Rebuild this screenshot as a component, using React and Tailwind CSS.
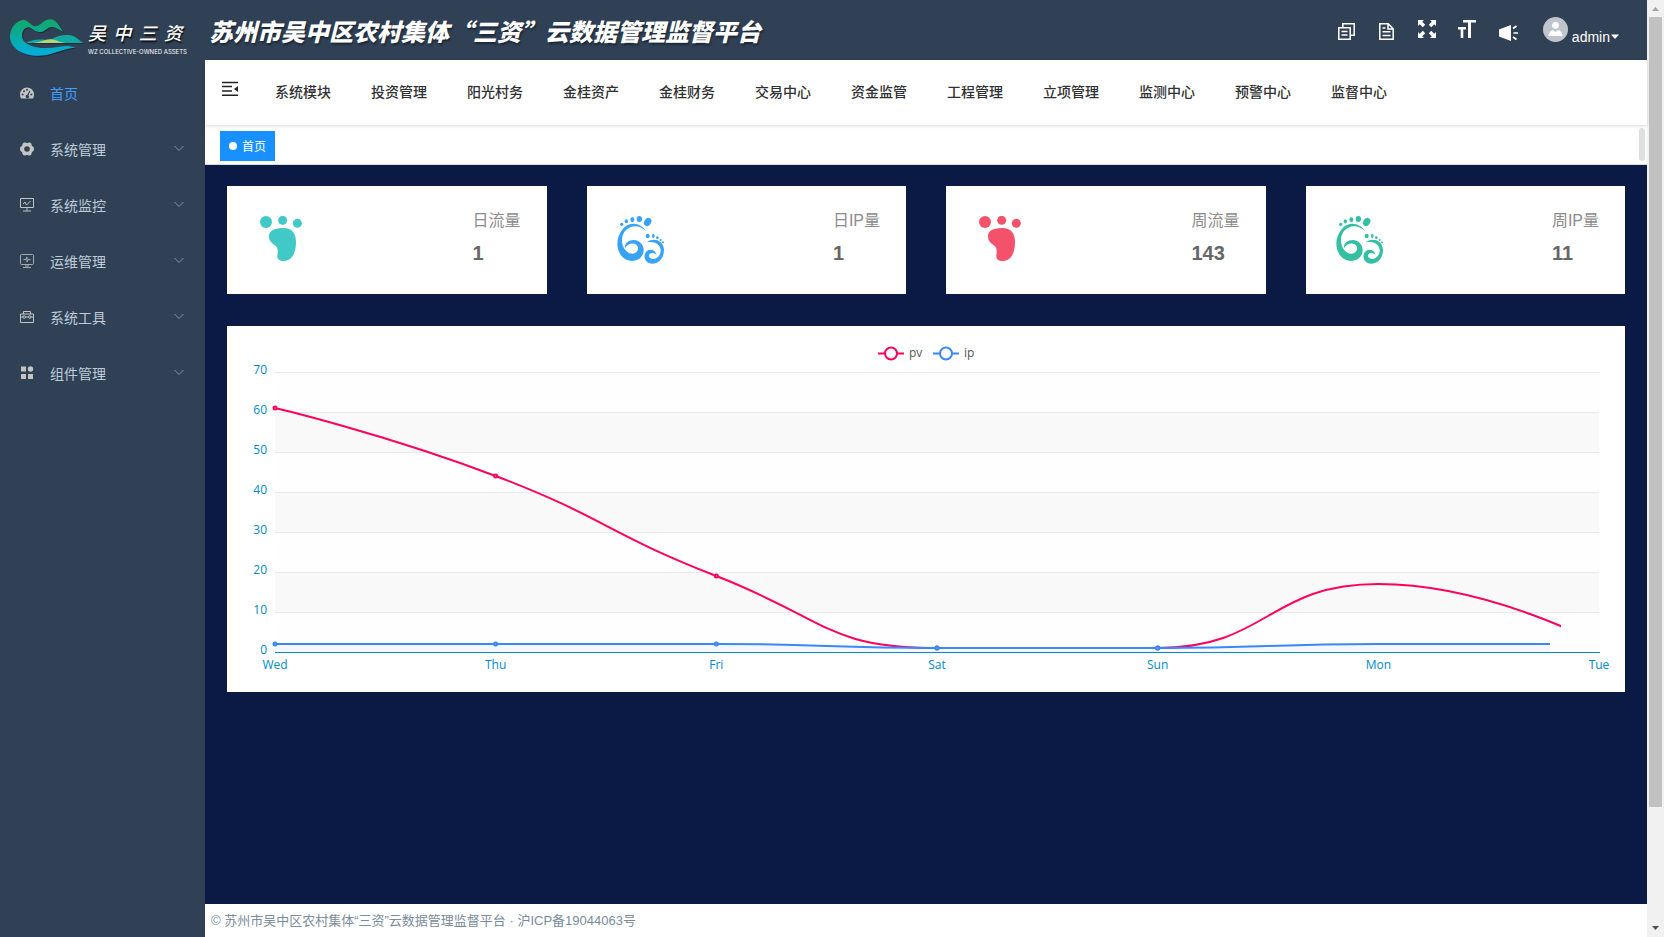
import { useState } from "react";

const menuItems = [
  { name: "首页", icon: "dashboard" },
  { name: "系统管理", icon: "system", children: true },
  { name: "系统监控", icon: "monitor", children: true },
  { name: "运维管理", icon: "maintain", children: true },
  { name: "系统工具", icon: "tools", children: true },
  { name: "组件管理", icon: "component", children: true },
];

const modules = [
  "系统模块",
  "投资管理",
  "阳光村务",
  "金桂资产",
  "金桂财务",
  "交易中心",
  "资金监管",
  "工程管理",
  "立项管理",
  "监测中心",
  "预警中心",
  "监督中心",
];

const stats = [
  { label: "日流量", value: 1, icon: "foot", color: "text-[#40c9c6]" },
  { label: "日IP量", value: 1, icon: "feet", color: "text-[#36a3f7]" },
  { label: "周流量", value: 143, icon: "foot", color: "text-[#f4516c]" },
  { label: "周IP量", value: 11, icon: "feet", color: "text-[#34bfa3]" },
];

const days = ["Wed", "Thu", "Fri", "Sat", "Sun", "Mon", "Tue"];
const pv = [61, 44, 19, 1, 1, 17, 2];
const ip = [2, 2, 2, 1, 1, 2, 2];

const menuIcons = {
  dashboard: (
    <>
      <path
        fill="currentColor"
        d="M7 1.5a7 7 0 0 0-7 7c0 1.5.4 2.9 1 4h12c.6-1.1 1-2.500 1-4a7 7 0 0 0-7-7Z"
      />
      <g fill="#304156">
        <circle cx="2.6" cy="8.6" r="1" />
        <circle cx="4" cy="5.2" r="1" />
        <circle cx="7" cy="3.7" r="1" />
        <circle cx="11.4" cy="8.6" r="1" />
        <path d="M9.500 4.500l.9.5-1.900 4.200a1.700 1.700 0 1 1-1.200-.4Z" />
      </g>
    </>
  ),
  system: (
    <path
      fill="currentColor"
      fillRule="evenodd"
      d="M4.300.5c.9-.4 1.700.6 2.700.6S8.800.1 9.700.5l1.300.8c.8.6.4 1.700.9 2.500s1.800.9 2 1.900v2.600c-.2 1-1.500 1.100-2 1.900s-.1 1.900-.9 2.500l-1.300.8c-.9.4-1.700-.6-2.700-.6s-1.800 1-2.700.6L3 12.700c-.8-.6-.4-1.700-.9-2.500s-1.800-.9-2-1.900V5.700c.2-1 1.500-1.100 2-1.900S2.200 1.900 3 1.300ZM7 4.200a2.800 2.800 0 1 0 0 5.600 2.800 2.800 0 0 0 0-5.600Z"
    />
  ),
  monitor: (
    <g fill="none" stroke="currentColor">
      <path d="M.5.5h13v9H.5zM7 9.500v3M3 13h8" />
      <path d="M3 6l2-2 1.500 3L10.500 3" />
    </g>
  ),
  maintain: (
    <g fill="none" stroke="currentColor" opacity=".8">
      <rect x=".5" y=".5" width="13" height="10" rx="1" />
      <path d="M3.500 5.500H6L7 3v5l1-2.500h2.500" />
      <path d="M5 12h4M3 13.500h8" />
    </g>
  ),
  tools: (
    <g fill="none" stroke="currentColor">
      <path d="M.5 4h13v8.500H.5zM3.500 4V1.500h7V4" />
      <path d="M1 7h2.500M5.500 7h3M10.500 7H13" />
      <circle cx="4.200" cy="7" r="1.300" />
      <circle cx="9.800" cy="7" r="1.300" />
    </g>
  ),
  component: (
    <g fill="currentColor">
      <path d="M1 .5h5v5H1zM1 8h5v5H1zM8 8h5v5H8z" />
      <circle cx="10.500" cy="3" r="2.700" />
    </g>
  ),
};

const MenuIcon = ({ name }) => (
  <svg viewBox="0 0 14 14" className="h-[14px] w-[14px] shrink-0 text-[#c4c4c4]">
    {menuIcons[name]}
  </svg>
);

const Logo = () => (
  <div className="flex h-15 items-center gap-0.5 pt-4 pl-2.5">
    <svg viewBox="30 58 228 117" className="h-[39px] w-[76px] shrink-0">
      <defs>
        <linearGradient id="hill" x1="0" y1="0" x2="0" y2="1">
          <stop offset="0" stopColor="#12a866" />
          <stop offset="1" stopColor="#00aee0" />
        </linearGradient>
      </defs>
      <path
        fill="#1d2938"
        transform="translate(3 3)"
        d="M190 96C178 84 172 58 148 59C130 60 122 79 108 80C94 80 86 62 70 60C48 64 30 84 30 112C32 150 75 170 118 168C165 166 185 146 226 144C200 132 175 144 140 145C100 146 66 132 66 108C66 92 76 82 88 83C100 88 108 99 122 97C136 96 142 80 158 82C170 84 178 92 190 96Z"
      />
      <path
        fill="url(#hill)"
        d="M190 96C178 84 172 58 148 59C130 60 122 79 108 80C94 80 86 62 70 60C48 64 30 84 30 112C32 150 75 170 118 168C165 166 185 146 226 144C200 132 175 144 140 145C100 146 66 132 66 108C66 92 76 82 88 83C100 88 108 99 122 97C136 96 142 80 158 82C170 84 178 92 190 96Z"
      />
      <path
        fill="#1d2938"
        transform="translate(2 2)"
        d="M78 130C105 112 135 124 155 118C175 108 190 104 212 107C230 110 238 125 252 130Z"
      />
      <path fill="#10aaa0" d="M78 130C105 112 135 124 155 118C175 108 190 104 212 107C230 110 238 125 252 130Z" />
      <path fill="#b5d67a" d="M98 130C125 128 135 119 152 119C168 119 175 128 196 130Z" />
    </svg>
    <div className="w-[98px] text-white">
      <div className="flex justify-between pr-1 text-lg leading-6 font-medium italic [text-shadow:1px_2px_1px_#111]">
        <span>吴</span>
        <span>中</span>
        <span>三</span>
        <span>资</span>
      </div>
      <div className="mt-1 font-[Inter,sans-serif] text-[6px] leading-2 whitespace-nowrap">
        WZ COLLECTIVE-OWNED ASSETS
      </div>
    </div>
  </div>
);

const Sidebar = ({ active, onSelect }) => (
  <aside className="w-[205px] shrink-0 bg-[#304156]">
    <Logo />
    <nav className="pt-1.5">
      {menuItems.map((item) => (
        <button
          key={item.name}
          onClick={() => onSelect(item.name)}
          className={`flex h-14 w-full items-center px-5 pb-0.5 text-sm ${
            active === item.name ? "text-[#409eff]" : "text-[#bfcbd9]"
          }`}
        >
          <MenuIcon name={item.icon} />
          <span className="ml-4 flex-1 text-left">{item.name}</span>
          {item.children && (
            <svg viewBox="0 0 12 12" className="mb-0.5 h-3 w-3 text-[#8a94a0]">
              <path d="M1.500 4l4.500 4.500L10.500 4" fill="none" stroke="currentColor" />
            </svg>
          )}
        </button>
      ))}
    </nav>
  </aside>
);

const TopBar = () => (
  <header className="flex h-15 items-center justify-between bg-[#304156] pr-[27px] pl-1 text-white">
    <h1 className="pt-0.5 text-2xl leading-8 font-black whitespace-nowrap italic [text-shadow:1px_2px_2px_#1c2735]">
      苏州市吴中区农村集体“三资”云数据管理监督平台
    </h1>
    <div className="flex items-center gap-5 pt-0.5">
      <button aria-label="复制">
        <svg viewBox="0 0 20 24" className="h-6 w-5" fill="none" stroke="currentColor" strokeWidth="1.5">
          <path d="M1.800 8.800h11.400v11.400H1.800zM5.800 8V4.800h11.400v11.400H14M4.500 12.500h6M4.500 16h6" />
        </svg>
      </button>
      <button aria-label="文档">
        <svg viewBox="0 0 20 24" className="h-6 w-5" fill="none" stroke="currentColor" strokeWidth="1.5">
          <path d="M2.800 4.800h8.400l5 5v10.400H2.800zM11 5v5h5M5.500 9h3M5.500 12.800h8M5.500 16.500h8" />
        </svg>
      </button>
      <button aria-label="全屏">
        <svg viewBox="0 0 20 24" className="h-6 w-5" fill="currentColor">
          <path d="M1 1h6L5.200 2.800 8.200 5.800 5.800 8.200 2.800 5.200 1 7zM19 1v6l-1.800-1.800-3 3-2.400-2.400 3-3L13 1zM1 19v-6l1.800 1.800 3-3 2.400 2.400-3 3L7 19zM19 19h-6l1.800-1.800-3-3 2.400-2.400 3 3L19 13z" />
        </svg>
      </button>
      <button aria-label="字号">
        <svg viewBox="0 0 20 24" className="h-6 w-5" fill="currentColor">
          <path d="M6 1h13v2.500h-5V19h-3V3.500H6zM1 8h8v2.500H6.300V19H3.700v-8.500H1z" />
        </svg>
      </button>
      <button aria-label="公告">
        <svg viewBox="0 0 22 24" className="h-6 w-[22px]">
          <path fill="currentColor" d="M2 10.500l4-1.500 8-3v16l-8-3-4-1.500z" />
          <path d="M16 9.500l3.500-2.500M16.500 14H21M16 18l3.500 2.500" stroke="currentColor" strokeWidth="1.7" />
        </svg>
      </button>
      <button className="ml-1 flex items-center text-sm">
        <svg viewBox="0 0 25 25" className="mr-1 mb-1 h-[25px] w-[25px]">
          <circle cx="12.5" cy="12.5" r="12.5" fill="#c0c4cc" />
          <circle cx="12.5" cy="8.3" r="3.4" fill="#fff" />
          <path fill="#fff" d="M5.500 19c.2-3.500 2-5.500 4.500-6l2.500 2 2.500-2c2.500.5 4.300 2.500 4.500 6z" />
        </svg>
        <span className="pt-3 font-[Liberation_Sans,sans-serif]">admin</span>
        <svg viewBox="0 0 10 6" className="mt-3 h-1.5 w-[10px]">
          <path fill="currentColor" d="M1 .5h8L5 5z" />
        </svg>
      </button>
    </div>
  </header>
);

const ModuleNav = () => (
  <nav className="relative z-10 flex h-[65px] items-center bg-white pb-1 pl-4 shadow-[0_1px_3px_rgba(0,21,41,0.16)]">
    <button aria-label="收起菜单" className="mb-1">
      <svg viewBox="0 0 18 16" className="h-4 w-[18px]" fill="none" stroke="#222" strokeWidth="1.4">
        <path d="M1 1.500h16M1 5.500h10M1 10h10M1 14.300h16" />
        <path d="M17 5v6l-4-3z" fill="#222" stroke="none" />
      </svg>
    </button>
    <div className="ml-4 flex">
      {modules.map((m) => (
        <a key={m} href="#" className="px-5 text-sm font-medium whitespace-nowrap text-[#303133]">
          {m}
        </a>
      ))}
    </div>
  </nav>
);

const TagsBar = () => (
  <div className="flex h-10 items-center justify-between border-b border-[#d8dce5] bg-white pr-0.5 pl-[15px]">
    <a
      href="#"
      className="mt-0.5 flex h-[30px] items-center gap-[5px] bg-[#1890ff] pr-[9px] pl-[9px] text-xs text-white"
    >
      <span className="h-2 w-2 rounded-full bg-white" />
      首页
    </a>
    <div className="h-[33px] w-1.5 rounded-full bg-[#dddee0]" />
  </div>
);

const Foot = () => (
  <svg viewBox="111 108 144 144" className="h-12 w-12" fill="currentColor">
    <circle cx="138" cy="126" r="18" />
    <circle cx="188" cy="121" r="13.5" />
    <circle cx="232" cy="130" r="13.5" />
    <path d="M187 144C215 143 228 158 228 187C228 222 214 243 190 243C178 243 171 237 172 226C173 216 175 210 170 202C165 192 147 191 147 169C147 152 162 145 187 144Z" />
  </svg>
);

const Feet = () => (
  <svg viewBox="0 0 144 144" className="h-12 w-12" fill="currentColor">
    <circle cx="14" cy="25" r="5" />
    <ellipse cx="28" cy="16" rx="5" ry="6" />
    <ellipse cx="46" cy="11" rx="6" ry="7" />
    <ellipse cx="67" cy="9" rx="8" ry="9" />
    <ellipse cx="92" cy="18" rx="10" ry="13" transform="rotate(35 92 18)" />
    <path d="M87 46C76 24 40 12 18 38C-3 62-4 96 12 118C28 141 64 140 76 118C88 96 72 72 50 72C34 72 22 82 24 97C31 84 45 79 56 85C69 94 64 111 48 113C30 114 15 94 15 74C14 34 60 16 87 46Z" />
    <ellipse cx="92" cy="60" rx="6" ry="7" />
    <ellipse cx="109" cy="60" rx="4" ry="6" />
    <circle cx="121" cy="65" r="4" />
    <circle cx="131" cy="72" r="3" />
    <circle cx="138" cy="79" r="3" />
    <path d="M89 79C109 64 139 72 141 101C141 128 124 143 106 143C88 143 80 128 83 116C88 96 114 96 119 117C108 106 95 112 96 121C99 133 121 132 129 115C137 96 123 72 89 79Z" />
  </svg>
);

const StatCard = ({ stat }) => (
  <div className="flex h-27 justify-between bg-white pt-[30px] pr-[26px] pl-[30px]">
    <div className={stat.color}>{stat.icon === "foot" ? <Foot /> : <Feet />}</div>
    <div className="-mt-[7px] font-[Liberation_Sans,Noto_Sans_CJK_SC,sans-serif]">
      <div className="text-base leading-6 text-[#8c8c8c]">{stat.label}</div>
      <div className="mt-2 text-xl leading-6 font-bold text-[#666]">{stat.value}</div>
    </div>
  </div>
);

const LEFT = 48;
const RIGHT = 1372;
const BASE = 326;
const STEP = (RIGHT - LEFT) / (days.length - 1);

const toPoints = (values) => values.map((v, i) => [LEFT + i * STEP, BASE - v * 4]);

// cubic curve through the points, flat at local extremes
const smoothPath = (points) => {
  const slope = (i) => {
    if (i === 0 || i === points.length - 1) return 0;
    const before = points[i][1] - points[i - 1][1];
    const after = points[i + 1][1] - points[i][1];
    return before * after <= 0 ? 0 : (before + after) / 4;
  };

  let d = `M${points[0][0]} ${points[0][1]}`;
  for (let i = 1; i < points.length; i++) {
    const [x0, y0] = points[i - 1];
    const [x1, y1] = points[i];
    const c0 = i === 1 ? x0 : x0 + STEP / 2;
    const c1 = i === points.length - 1 ? x1 : x1 - STEP / 2;
    d += `C${c0} ${y0 + slope(i - 1)} ${c1} ${y1 - slope(i)} ${x1} ${y1}`;
  }
  return d;
};

const TrafficChart = () => {
  const pvPoints = toPoints(pv);
  const ipPoints = toPoints(ip);
  const ipPath = smoothPath(ipPoints);

  return (
    <svg viewBox="0 0 1398 366" className="block w-full bg-white font-[Open_Sans,sans-serif] text-[12px]">
      <clipPath id="pvClip">
        <rect x="0" y="0" width="1334" height="366" />
      </clipPath>
      <clipPath id="ipClip">
        <rect x="0" y="0" width="1323" height="366" />
      </clipPath>

      {/* bands */}
      {[70, 60, 50, 40, 30, 20, 10].map((v, i) => (
        <g key={v}>
          <rect
            x={LEFT}
            y={BASE - v * 4}
            width={RIGHT - LEFT}
            height="40"
            fill={i % 2 ? "#f9f9f9" : "#fefefe"}
          />
          <path d={`M${LEFT} ${BASE - v * 4 + 0.5}H${RIGHT}`} stroke="#eaeaea" />
        </g>
      ))}

      {[0, 10, 20, 30, 40, 50, 60, 70].map((v) => (
        <text key={v} x="40" y={BASE + 2 - v * 4} textAnchor="end" fill="#008acd">
          {v}
        </text>
      ))}
      {days.map((day, i) => (
        <text key={day} x={LEFT + i * STEP} y="343" textAnchor="middle" fill="#008acd">
          {day}
        </text>
      ))}

      <path d={`M${LEFT} ${BASE + 0.5}H${RIGHT + 1}`} stroke="#008acd" />

      {/* series */}
      <path
        d={`${ipPath}V${BASE}H${LEFT}Z`}
        fill="#3888fa"
        fillOpacity="0.05"
        clipPath="url(#ipClip)"
      />
      <path d={smoothPath(pvPoints)} fill="none" stroke="#ff005a" strokeWidth="2" clipPath="url(#pvClip)" />
      {pvPoints.slice(0, 5).map(([x, y]) => (
        <circle key={x} cx={x} cy={y} r="1.5" fill="#fff" stroke="#ff005a" strokeWidth="2" />
      ))}
      <path d={ipPath} fill="none" stroke="#3888fa" strokeWidth="2" clipPath="url(#ipClip)" />
      {ipPoints.slice(0, 5).map(([x, y]) => (
        <circle key={x} cx={x} cy={y} r="1.5" fill="#a9c9f5" stroke="#3888fa" strokeWidth="2" />
      ))}

      {/* legend */}
      <g strokeWidth="2" fill="#fff">
        <path d="M651 27.500h26" stroke="#ff005a" />
        <circle cx="664" cy="27.5" r="6" stroke="#ff005a" />
        <path d="M706 27.500h26" stroke="#3888fa" />
        <circle cx="719" cy="27.5" r="6" stroke="#3888fa" />
      </g>
      <text x="682" y="31" fill="#555">pv</text>
      <text x="737" y="31" fill="#555">ip</text>
    </svg>
  );
};

const ScrollTrack = () => (
  <div aria-hidden="true" className="flex w-[17px] shrink-0 flex-col items-center bg-[#f1f1f1]">
    <svg viewBox="0 0 17 17" className="h-[17px] w-[17px]">
      <path fill="#a3a3a3" d="M5 11h7L8.500 7z" />
    </svg>
    <div className="w-[13px] grow-7 basis-0 bg-[#c1c1c1]" />
    <div className="grow basis-0" />
    <svg viewBox="0 0 17 17" className="h-[17px] w-[17px]">
      <path fill="#505050" d="M5 6h7l-3.500 4z" />
    </svg>
  </div>
);

const App = () => {
  const [active, setActive] = useState("首页");

  return (
    <div lang="zh-CN" className="flex min-h-screen font-[Noto_Sans_CJK_SC,sans-serif]">
      <Sidebar active={active} onSelect={setActive} />
      <div className="flex min-w-0 flex-1 flex-col bg-[#0b1a44]">
        <TopBar />
        <ModuleNav />
        <TagsBar />
        <main className="flex-1 px-[22px] pt-[21px] pb-8">
          <div className="mb-8 grid grid-cols-4 gap-10">
            {stats.map((s) => (
              <StatCard key={s.label} stat={s} />
            ))}
          </div>
          <TrafficChart />
        </main>
        <footer className="flex h-[33px] items-center bg-white pl-1.5 font-[Liberation_Sans,Noto_Sans_CJK_SC,sans-serif] text-[13px] text-[#7a8b9a]">
          © 苏州市吴中区农村集体“三资”云数据管理监督平台 · 沪ICP备19044063号
        </footer>
      </div>
      <ScrollTrack />
    </div>
  );
};

export default App;
